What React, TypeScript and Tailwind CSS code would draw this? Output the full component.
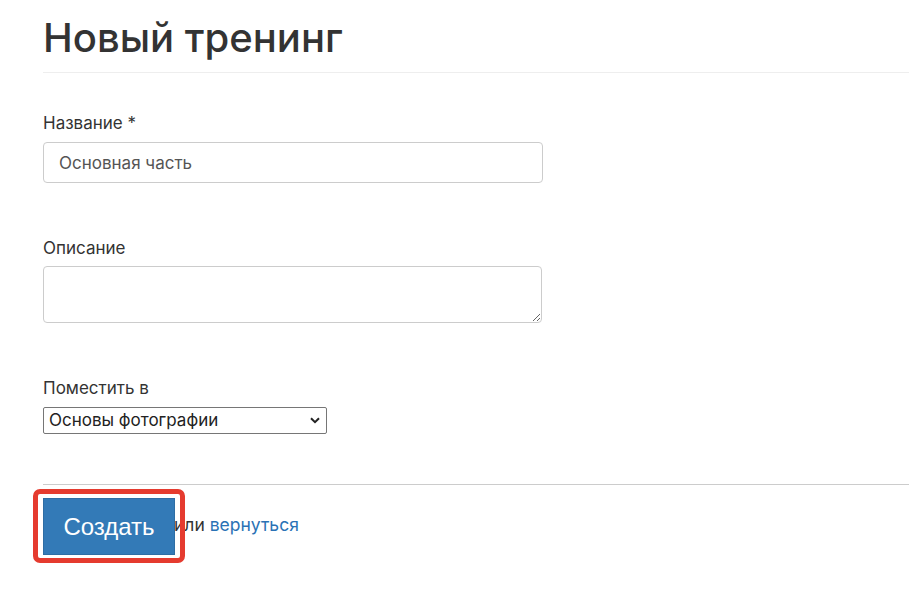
import React from "react";

export default function App() {
  const inter = { fontFamily: "Inter, 'Noto Sans', sans-serif" };
  return (
    <div className="min-h-[590px] w-[909px] overflow-hidden bg-white text-[#333]" style={inter}>
      <div className="pl-[43px]">
        <h1 className="mt-[14px] text-[40px] font-[550] leading-[48px] text-[#333]">Новый тренинг</h1>
        <div className="mt-[10px] h-px bg-[#eeeeee]" />

        <label className="mt-[38px] block text-[17px] leading-[24px] text-[#333]">Название *</label>
        <input
          defaultValue="Основная часть"
          className="mt-[7px] block h-[41px] w-[500px] rounded-[4px] border border-[#cccccc] px-[15px] text-[17px] text-[#555] outline-none"
        />

        <label className="mt-[53px] block text-[17px] leading-[24px] text-[#333]">Описание</label>
        <textarea className="mt-[6px] block h-[57px] w-[499px] rounded-[4px] border border-[#cccccc] px-[15px] py-[6px] text-[17px] text-[#555] outline-none" />

        <label className="mt-[53px] block text-[17px] leading-[24px] text-[#333]">Поместить в</label>
        <div className="relative mt-[7px] w-[284px]">
          <select
            defaultValue="photo"
            className="block h-[27px] w-[284px] appearance-none rounded-[2px] border border-[#767676] bg-white pl-[5px] text-[17px] leading-[25px] text-[#222] outline-none"
          >
            <option value="photo">Основы фотографии</option>
          </select>
          <svg className="pointer-events-none absolute right-[7px] top-[10px]" width="10" height="7" viewBox="0 0 10 7">
            <path d="M1 1.2 L5 5.2 L9 1.2" fill="none" stroke="#222" strokeWidth="2" />
          </svg>
        </div>

        <div className="mt-[50px] h-px bg-[#cccccc]" />

        <div className="mt-[13px] flex items-center">
          <div className="relative">
            <button
              className="flex h-[57px] w-[132px] items-center justify-center border border-[#2e6da4] bg-[#337ab7] text-[24px] text-white"
              style={{ fontFamily: "'Liberation Sans', Arial, sans-serif" }}
            >
              Создать
            </button>
            <div className="pointer-events-none absolute -left-[10px] -right-[10px] -top-[9px] -bottom-[8px] rounded-[7px] border-[5px] border-[#e53b2f]" />
          </div>
          <span className="ml-[-1px] mt-[-2px] text-[17.5px] text-[#333]">
            или <a className="text-[#2a72b5]">вернуться</a>
          </span>
        </div>
      </div>
    </div>
  );
}
